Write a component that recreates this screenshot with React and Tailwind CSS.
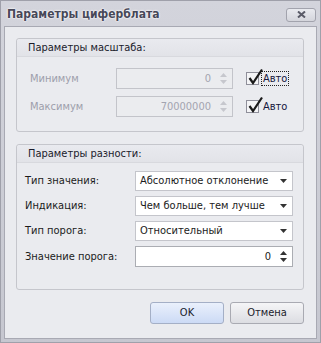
import React from "react";

const F = { fontFamily: '"DejaVu Sans Condensed", "Liberation Sans", Arial, sans-serif' };

function Check() {
  return (
    <div className="relative w-[13px] h-[13px] border border-[#8f8f9a] bg-[#f4f4f6] shrink-0">
      <svg className="absolute left-[1px] top-[-5px]" width="16" height="17" viewBox="0 0 16 17">
        <path d="M1.5 10 L5 15 L14 1.5" fill="none" stroke="#1a1a1a" strokeWidth="2.2" strokeLinejoin="miter" />
      </svg>
    </div>
  );
}

function Spin({ value, disabled, w }) {
  return (
    <div className={`flex items-center h-[21px] border ${disabled ? "border-[#c3c4ca] bg-[#ebecef]" : "border-[#abadb3] bg-white"} ${w}`}>
      <div className={`flex-1 text-right pr-[6px] ${disabled ? "text-[#a3a4b0]" : "text-[#1b1b1b]"}`}>{value}</div>
      <div className="w-[12px] mr-[3px] flex flex-col items-center gap-[3px]">
        <svg width="7" height="4" viewBox="0 0 7 4"><path d="M0 4 L3.5 0 L7 4 Z" fill={disabled ? "#c6c7cd" : "#333"} /></svg>
        <svg width="7" height="4" viewBox="0 0 7 4"><path d="M0 0 L3.5 4 L7 0 Z" fill={disabled ? "#c6c7cd" : "#333"} /></svg>
      </div>
    </div>
  );
}

function Combo({ text }) {
  return (
    <div className="flex items-center h-[20px] w-[158px] border border-[#c4c5cb] bg-white">
      <div className="flex-1 pl-[4px] text-[#1b1b1b] whitespace-nowrap">{text}</div>
      <svg className="mr-[5px]" width="7" height="4" viewBox="0 0 7 4"><path d="M0 0 L3.5 4 L7 0 Z" fill="#333" /></svg>
    </div>
  );
}

function Group({ title, children, h }) {
  return (
    <div className={`flex flex-col border border-[#c5c6cc] rounded-[3px] ${h}`}>
      <div className="h-[18px] flex items-center pl-[11px] bg-gradient-to-b from-[#e9eaef] to-[#e2e3e8] border-b border-[#d8d9de] text-[#1b1b2b] rounded-t-[3px]">
        {title}
      </div>
      {children}
    </div>
  );
}

export default function App() {
  return (
    <div style={F} className="w-[321px] h-[343px] text-[11px] leading-[14px] border border-[#9fa0aa] bg-gradient-to-b from-[#d3d4dc] to-[#c6c7d0] flex flex-col">
      <div className="h-[25px] flex items-center pl-[6px] pr-[4px] shrink-0">
        <div className="flex-1 font-bold text-[12px] text-[#474858] pt-[1px]" style={{ textShadow: "0 0 2px #ffffff, 0 0 2px #ffffff" }}>
          Параметры циферблата
        </div>
        <div className="w-[30px] h-[14px] mt-[2px] border border-[#a2a3ad] rounded-[3px] bg-gradient-to-b from-[#e9eaef] to-[#d4d5dc] flex items-center justify-center">
          <svg width="9" height="7" viewBox="0 0 9 7"><path d="M1 0.5 L8 6.5 M8 0.5 L1 6.5" stroke="#5a5b68" strokeWidth="2" /></svg>
        </div>
      </div>
      <div className="flex-1 mx-[3px] mb-[3px] border border-[#a8a9b3] bg-[#eaebef] pt-[11px] pl-[11px] pr-[12px] flex flex-col">
        <Group title="Параметры масштаба:" h="h-[94px]">
          <div className="flex flex-col gap-[7px] pt-[11px] pl-[13px]">
            <div className="flex items-center">
              <div className="w-[86px] text-[#9d9eab]">Минимум</div>
              <Spin value="0" disabled w="w-[117px]" />
              <div className="ml-[13px]"><Check /></div>
              <div className="ml-[2px] px-[1px] border border-dotted border-[#222] text-[#15153a] leading-[13px]">Авто</div>
            </div>
            <div className="flex items-center">
              <div className="w-[86px] text-[#9d9eab]">Максимум</div>
              <Spin value="70000000" disabled w="w-[117px]" />
              <div className="ml-[13px]"><Check /></div>
              <div className="ml-[3px] px-[1px] text-[#15153a]">Авто</div>
            </div>
          </div>
        </Group>
        <div className="h-[12px]" />
        <Group title="Параметры разности:" h="h-[146px]">
          <div className="flex flex-col pt-[8px] pl-[8px] gap-[5px]">
            {[
              ["Тип значения:", "Абсолютное отклонение"],
              ["Индикация:", "Чем больше, тем лучше"],
              ["Тип порога:", "Относительный"],
            ].map(([l, v]) => (
              <div key={l} className="flex items-center">
                <div className="w-[110px] text-[#1b1b1b]">{l}</div>
                <Combo text={v} />
              </div>
            ))}
            <div className="flex items-center">
              <div className="w-[110px] text-[#1b1b1b]">Значение порога:</div>
              <Spin value="0" w="w-[158px]" />
            </div>
          </div>
        </Group>
        <div className="flex justify-end gap-[6px] mt-[12px]">
          <div className="w-[74px] h-[22px] rounded-[3px] border border-[#a4afc6] bg-gradient-to-b from-[#eaf0fc] to-[#ccdaf5] flex items-center justify-center text-[#1b1b2b]">OK</div>
          <div className="w-[74px] h-[22px] rounded-[3px] border border-[#a9aab2] bg-gradient-to-b from-[#f5f5f7] to-[#dcdde2] flex items-center justify-center text-[#1b1b2b]">Отмена</div>
        </div>
      </div>
    </div>
  );
}
